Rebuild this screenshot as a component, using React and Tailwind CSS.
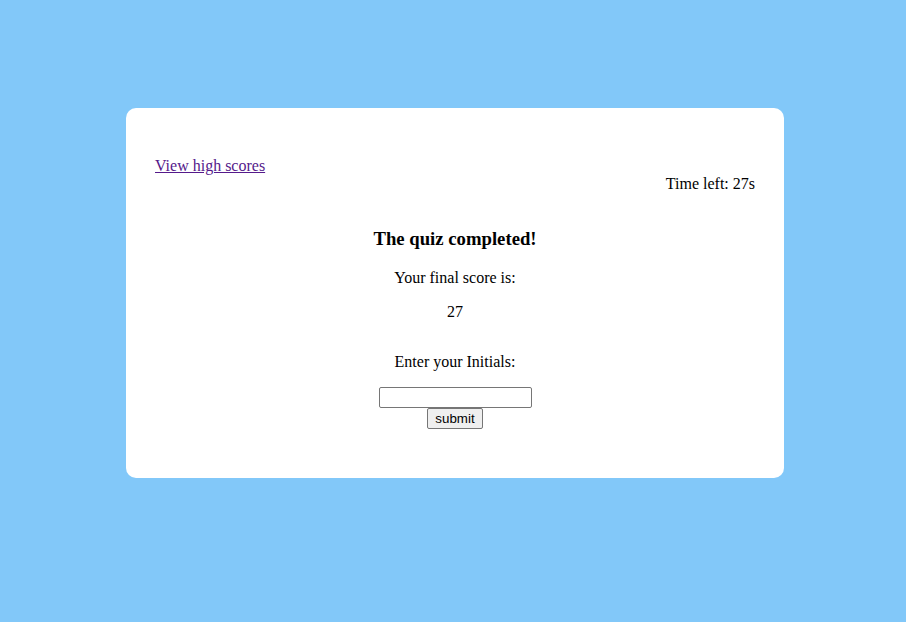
export default function App() {
  return (
    <div className="min-h-[622px] w-full bg-[#82c8f9] pt-[108px] font-['Liberation_Serif',serif] text-[16px] text-black">
      <div className="ml-[126px] w-[658px] rounded-[10px] bg-white px-[29px] pt-[49px] pb-[49px]">
        <div className="leading-[18px]">
          <a href="#" className="text-[#551a8b] underline">View high scores</a>
        </div>
        <div className="text-right leading-[18px]">Time left: 27s</div>

        <div className="mt-[35px] text-center">
          <h3 className="text-[18.72px] font-bold leading-[22px]">The quiz completed!</h3>
          <p className="mt-[19px] leading-[18px]">Your final score is:</p>
          <p className="mt-[16px] leading-[18px]">27</p>
          <p className="mt-[32px] leading-[18px]">Enter your Initials:</p>
          <div className="mt-[16px] flex flex-col items-center font-['Liberation_Sans',Arial,sans-serif] text-[13.33px]">
            <input
              type="text"
              className="h-[21px] w-[153px] rounded-[2px] border border-[#767676] bg-white px-[2px]"
            />
            <button className="h-[21px] rounded-[2px] border border-[#767676] bg-[#efefef] px-[7px] leading-[16px]">
              submit
            </button>
          </div>
        </div>
      </div>
    </div>
  );
}
